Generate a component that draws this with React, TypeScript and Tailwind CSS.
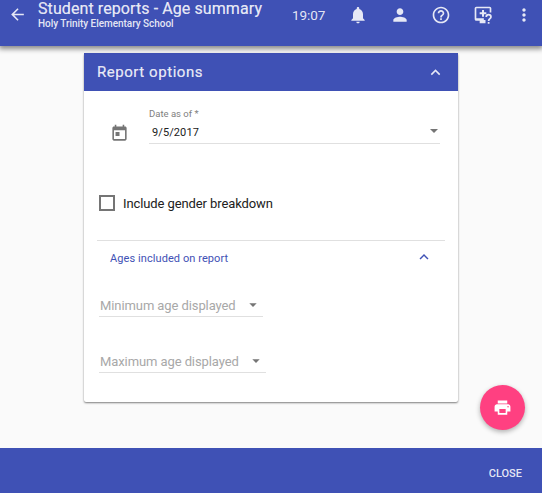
import type { ReactNode } from 'react';

function Icon({ children, className }: { children: ReactNode; className: string }) {
  return (
    <svg viewBox="0 0 24 24" fill="currentColor" className={`block shrink-0 ${className}`}>
      {children}
    </svg>
  );
}

function TopBar() {
  return (
    <header className="relative z-10 flex h-[46px] shrink-0 items-start bg-[#3f51b5] text-white/87 shadow-[0_2px_5px_1px_rgba(0,0,0,0.45)]">
      <Icon className="mt-[5px] ml-2 size-[19px]">
        <path d="M20 11H7.83l5.59-5.59L12 4l-8 8 8 8 1.41-1.41L7.83 13H20v-2z" />
      </Icon>
      <div className="ml-[11px] w-[254px] whitespace-nowrap">
        <h1 className="h-[18px] text-[16px] leading-[18px] font-normal tracking-[0.09px] [-webkit-text-stroke:0.2px]">Student reports - Age summary</h1>
        <p className="text-[10px] leading-[12px] font-medium tracking-[-0.04px]">Holy Trinity Elementary School</p>
      </div>
      <span className="mt-[5px] w-[56px] text-[13.5px] leading-[20px] tracking-[-0.1px]">19:07</span>
      <div className="mt-[5px] flex w-[187px] items-center">
        <Icon className="size-5">
          <path d="M12 22c1.1 0 2-.9 2-2h-4c0 1.1.89 2 2 2zm6-6v-5c0-3.07-1.64-5.64-4.5-6.32V4c0-.83-.67-1.5-1.5-1.5s-1.5.67-1.5 1.5v.68C7.63 5.36 6 7.92 6 11v5l-2 2v1h16v-1l-2-2z" />
        </Icon>
        <Icon className="ml-[22px] size-5">
          <path d="M12 12c2.21 0 4-1.79 4-4s-1.79-4-4-4-4 1.79-4 4 1.79 4 4 4zm0 2c-2.67 0-8 1.34-8 4v2h16v-2c0-2.66-5.33-4-8-4z" />
        </Icon>
        <Icon className="ml-[21px] size-5">
          <path d="M11 18h2v-2h-2v2zm1-16C6.48 2 2 6.48 2 12s4.48 10 10 10 10-4.48 10-10S17.52 2 12 2zm0 18c-4.41 0-8-3.59-8-8s3.59-8 8-8 8 3.59 8 8-3.59 8-8 8zm0-14c-2.21 0-4 1.79-4 4h2c0-1.1.9-2 2-2s2 .9 2 2c0 2-3 1.75-3 5h2c0-2.25 3-2.5 3-5 0-2.21-1.79-4-4-4z" />
        </Icon>
        <Icon className="ml-[22px] size-5">
          <path d="M4 2h16a2 2 0 0 1 2 2v5h-2V4H4v12h9v2h2v4H8v-3H4a2 2 0 0 1-2-2V4a2 2 0 0 1 2-2z" />
          <path d="M10.8 6h2.4v2.8H16v2.4h-2.8V14h-2.4v-2.8H8V8.8h2.8z" />
          <path d="M14.8 14.4a3.9 3.9 0 0 1 7.8 0c0 2.4-2.8 2.7-2.8 4.9h-2.1c0-3 2.8-3.3 2.8-4.9a1.8 1.8 0 0 0-3.6 0zM17.7 20.3h2.1v2.1h-2.1z" />
        </Icon>
        <Icon className="ml-[21px] size-5">
          <path d="M12 8c1.1 0 2-.9 2-2s-.9-2-2-2-2 .9-2 2 .9 2 2 2zm0 2c-1.1 0-2 .9-2 2s.9 2 2 2 2-.9 2-2-.9-2-2-2zm0 6c-1.1 0-2 .9-2 2s.9 2 2 2 2-.9 2-2-.9-2-2-2z" />
        </Icon>
      </div>
    </header>
  );
}

function AgeSelect({ label, className }: { label: string; className: string }) {
  return (
    <div className={`ml-[15px] flex h-[23px] items-start border-b border-[#e0e0e0] pl-px ${className}`}>
      <span className="text-[13px] leading-[24px] tracking-[-0.09px] whitespace-nowrap text-[#a8a8a8]">{label}</span>
      <Icon className="mt-[3px] mr-0.5 ml-auto size-4 text-[#757575]">
        <path d="M6.5 9.5h11l-5.5 5.5z" />
      </Icon>
    </div>
  );
}

function ReportCard() {
  return (
    <section className="mt-[7px] ml-[84px] flex h-[349px] w-[374px] flex-col rounded-[2px] bg-white shadow-[0_1px_2px_rgba(0,0,0,0.5)]">
      <div className="flex h-[38px] items-center justify-between bg-[#3f51b5] pr-[13px] pl-[13px] text-white/87">
        <h2 className="text-[15px] leading-[20px] font-normal tracking-[0.55px] [-webkit-text-stroke:0.2px]">Report options</h2>
        <Icon className="size-[19px]">
          <path d="M12 8l-6 6 1.41 1.41L12 10.83l4.59 4.58L18 14z" />
        </Icon>
      </div>
      <div className="flex h-[53px] items-start pt-[17px]">
        <Icon className="mt-4 ml-[26px] size-[19px] text-[#757575]">
          <path d="M19 3h-1V1h-2v2H8V1H6v2H5c-1.11 0-1.99.9-1.99 2L3 19c0 1.1.89 2 2 2h14c1.1 0 2-.9 2-2V5c0-1.1-.9-2-2-2zm0 16H5V8h14v11zM7 10h5v5H7z" />
        </Icon>
        <div className="ml-5 h-9 w-[291px] border-b border-[#e0e0e0]">
          <div className="h-[13px] text-[9.5px] leading-[12px] text-[#808080]">Date as of *</div>
          <div className="flex justify-between pl-[3px]">
            <span className="pt-px text-[11px] leading-[22px] tracking-[0.1px] text-[#212121]">9/5/2017</span>
            <Icon className="mt-0.5 mr-[-2px] size-4 text-[#757575]">
              <path d="M6 9h12l-6 6z" />
            </Icon>
          </div>
        </div>
      </div>
      <label className="mt-[49px] ml-[15px] flex h-5 items-center">
        <span className="size-4 border-2 border-[#757575]" />
        <span className="ml-2 pt-px text-[13px] leading-5 tracking-[-0.1px] text-[#212121]">Include gender breakdown</span>
      </label>
      <div className="mt-[27px] ml-[13px] flex h-[36px] w-[348px] items-center justify-between border-t border-[#e0e0e0] pr-3 pl-[13px] text-[#3f51b5]">
        <span className="text-[11px] leading-4 tracking-[0.08px]">Ages included on report</span>
        <Icon className="mt-[-3px] size-[18px]">
          <path d="M12 8l-6 6 1.41 1.41L12 10.83l4.59 4.58L18 14z" />
        </Icon>
      </div>
      <AgeSelect label="Minimum age displayed" className="mt-[18px] w-[164px]" />
      <AgeSelect label="Maximum age displayed" className="mt-[33px] w-[167px]" />
    </section>
  );
}

export default function App() {
  return (
    <div className="relative flex h-[493px] w-[542px] flex-col overflow-hidden bg-[#fafafa] font-['Roboto','Liberation_Sans',sans-serif]">
      <TopBar />
      <main className="h-[402px] shrink-0">
        <ReportCard />
      </main>
      <button className="absolute top-[385px] left-[480px] flex size-[45px] items-center justify-center rounded-full bg-[#ff4081] text-white shadow-[0_2px_5px_rgba(0,0,0,0.3)]">
        <Icon className="size-[19px]">
          <path d="M19 8H5c-1.66 0-3 1.34-3 3v6h4v4h12v-4h4v-6c0-1.66-1.34-3-3-3zm-3 11H8v-5h8v5zm3-7c-.55 0-1-.45-1-1s.45-1 1-1 1 .45 1 1-.45 1-1 1zm-1-9H6v4h12V3z" />
        </Icon>
      </button>
      <footer className="flex h-[45px] shrink-0 items-center justify-end bg-[#3f51b5] pt-[6px] pr-5">
        <button className="text-[11px] leading-4 font-medium text-white/87">CLOSE</button>
      </footer>
    </div>
  );
}
